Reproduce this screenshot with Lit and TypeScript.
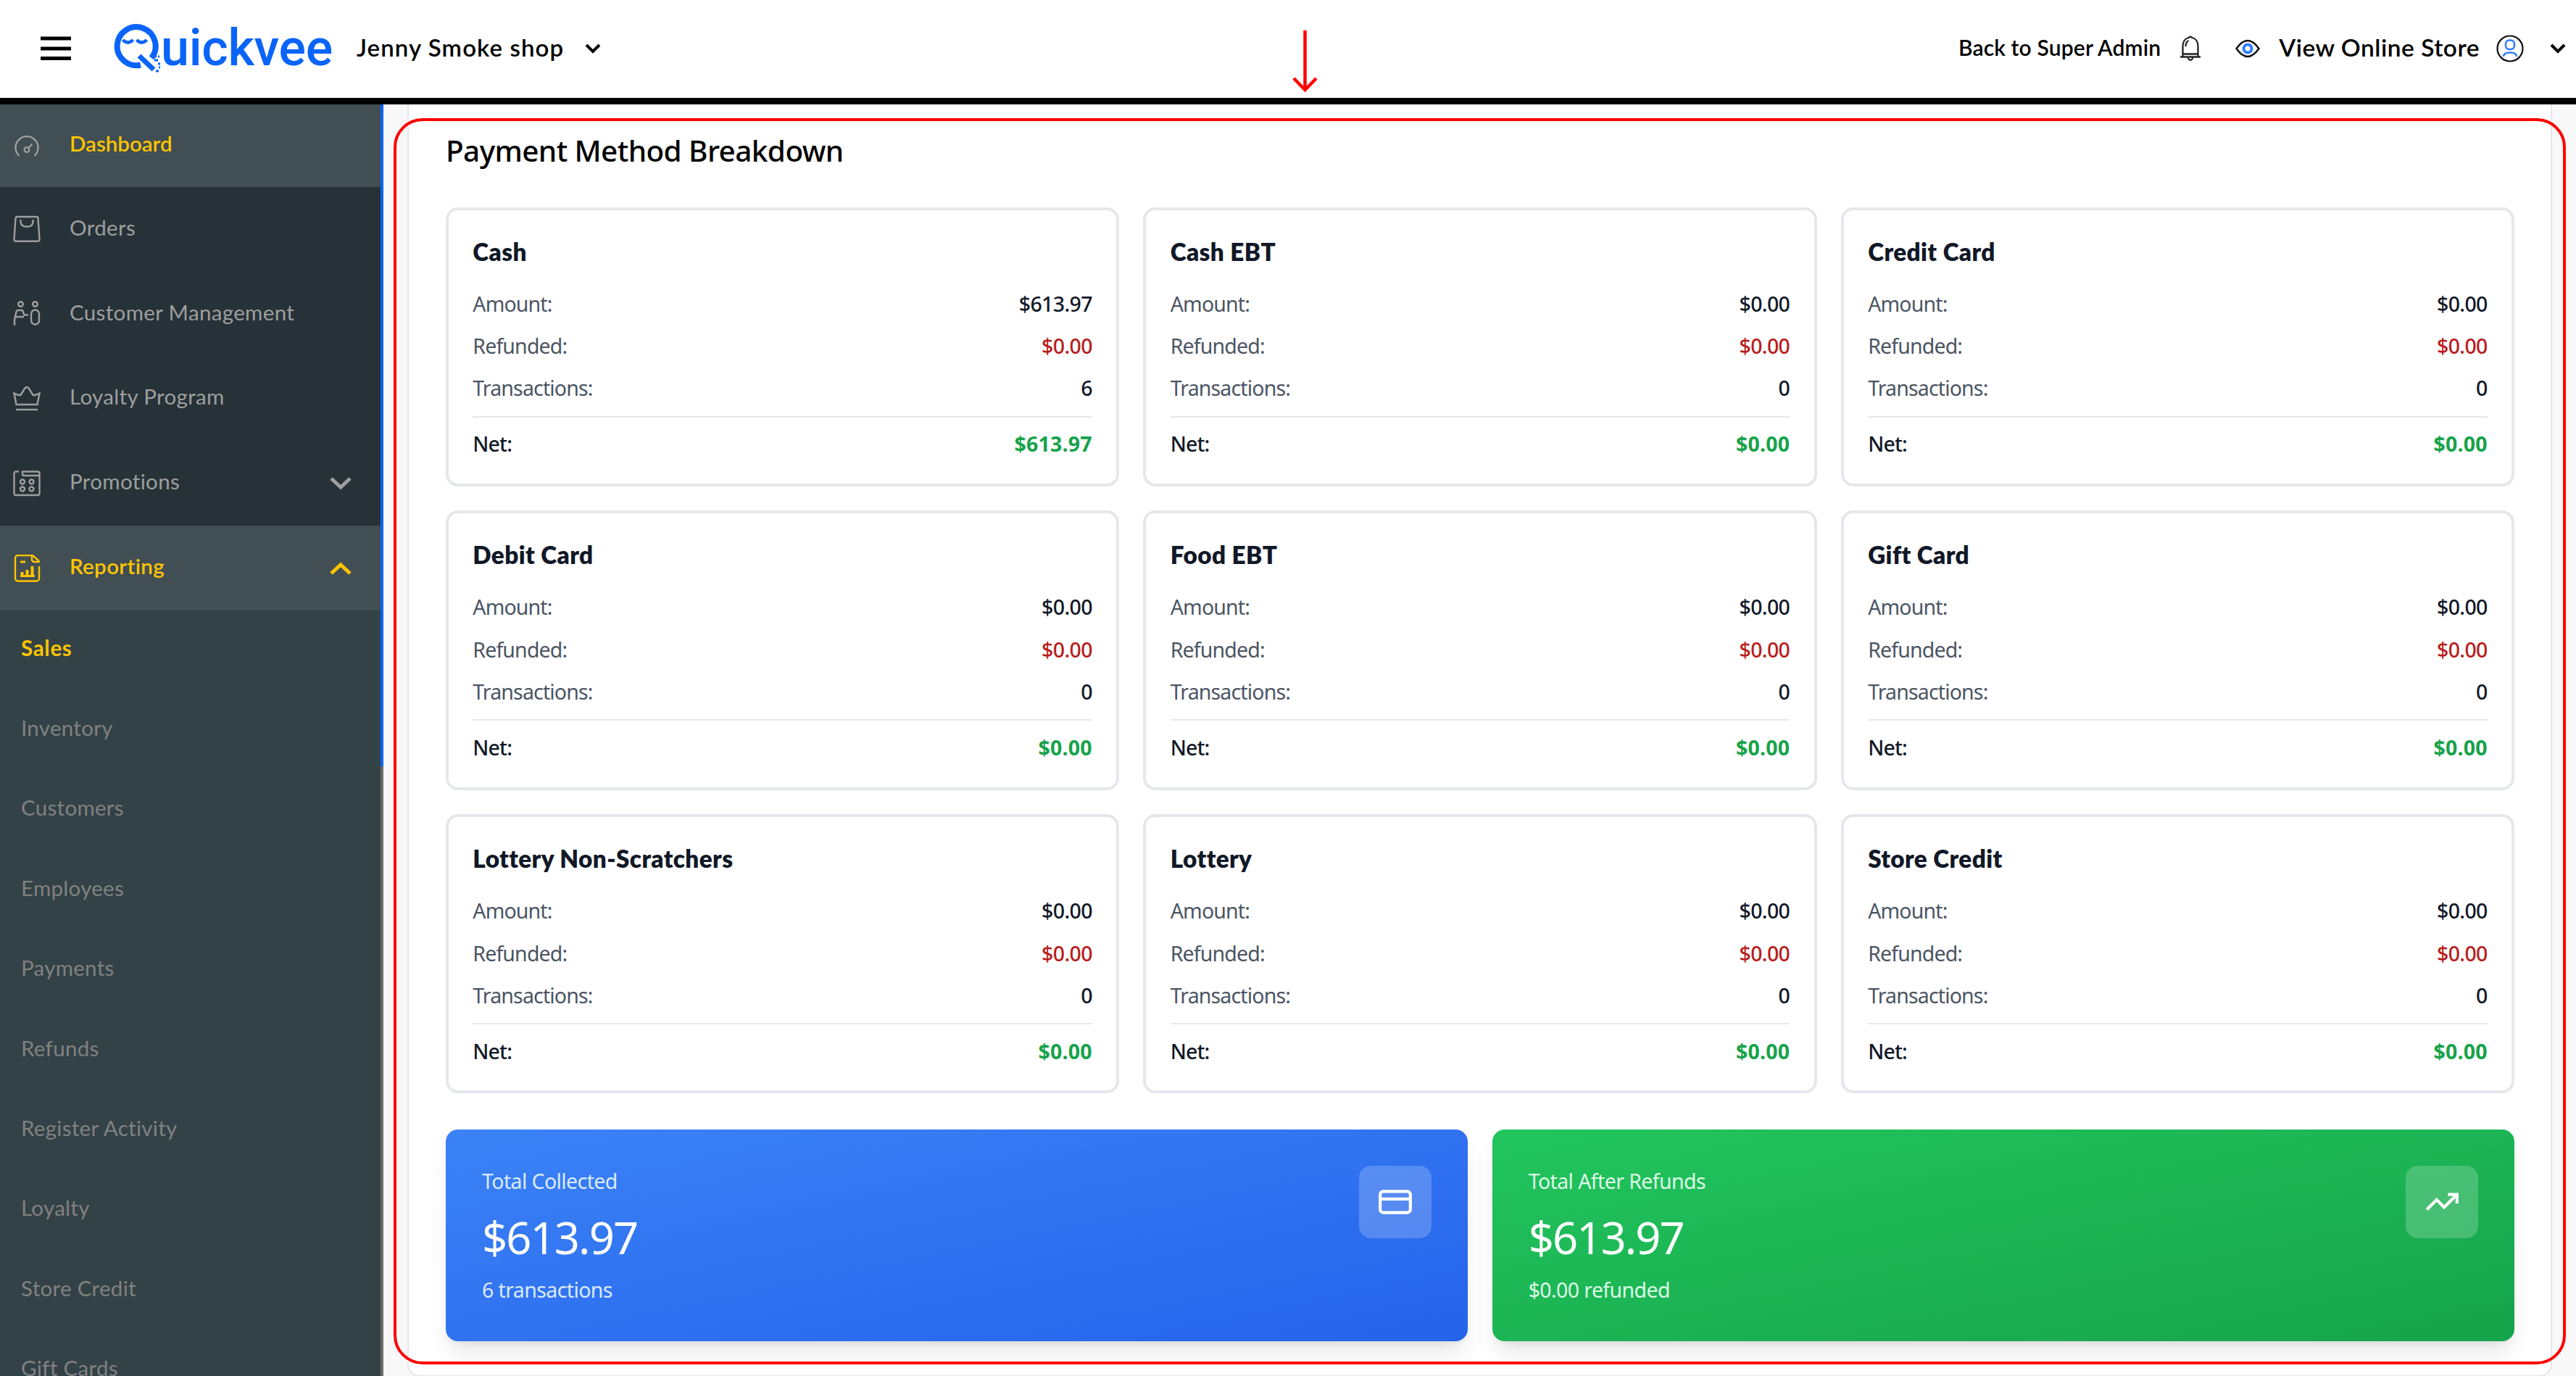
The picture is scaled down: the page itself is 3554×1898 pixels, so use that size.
import { LitElement, html, css, svg, nothing } from "lit";
import { customElement, property, state } from "lit/decorators.js";
import { classMap } from "lit/directives/class-map.js";

interface Method {
  name: string;
  amount: string;
  refunded: string;
  transactions: number;
  net: string;
}

const empty = (name: string): Method => ({
  name,
  amount: "$0.00",
  refunded: "$0.00",
  transactions: 0,
  net: "$0.00",
});

const METHODS: Method[] = [
  { name: "Cash", amount: "$613.97", refunded: "$0.00", transactions: 6, net: "$613.97" },
  empty("Cash EBT"),
  empty("Credit Card"),
  empty("Debit Card"),
  empty("Food EBT"),
  empty("Gift Card"),
  empty("Lottery Non-Scratchers"),
  empty("Lottery"),
  empty("Store Credit"),
];

const REPORTS = [
  "Sales",
  "Inventory",
  "Customers",
  "Employees",
  "Payments",
  "Refunds",
  "Register Activity",
  "Loyalty",
  "Store Credit",
  "Gift Cards",
];

const icons = {
  dashboard: svg`
    <path d="M8.5 33a15.5 15.5 0 1 1 21 0" />
    <circle cx="19" cy="24.500" r="3.4" />
    <path d="M21.5 22l5-5.500" />`,
  orders: svg`
    <path d="M5.500 2h27a2 2 0 0 1 2 2l2 29a2.500 2.500 0 0 1-2.500 2.700h-30a2.500 2.500 0 0 1-2.500-2.700l2-29a2 2 0 0 1 2-2z" />
    <path d="M10.500 6v2.500c0 4.500 3 7.200 8.500 7.200s8.500-2.700 8.500-7.200V6" />`,
  customers: svg`
    <circle cx="10.500" cy="5.500" r="3.300" />
    <circle cx="30.500" cy="5.500" r="3.300" />
    <path d="M2 35v-8l2.500-11q.500-2 2.500-2h6l2.500 6.500H21M2 26q1-3 4-3h9" />
    <rect x="25" y="13.500" width="11" height="20" rx="5.500" />`,
  loyalty: svg`
    <path d="M4.500 27L1.500 11.500q5 3 9 2.500l5.500-9q3-4 6 0l5.500 9q4 .500 9-2.500L33.500 27z" />
    <path d="M4 34h30" />`,
  promotions: svg`
    <path d="M8 2.500H4a2.500 2.500 0 0 0-2.500 2.500v27.500A2.500 2.500 0 0 0 4 35h30a2.500 2.500 0 0 0 2.500-2.500V5A2.500 2.500 0 0 0 34 2.500H13V6a2 2 0 0 0 2 2h21" />
    <circle cx="13" cy="16.500" r="3" />
    <circle cx="25.500" cy="16.500" r="3" />
    <circle cx="13" cy="26.500" r="3" />
    <circle cx="25.500" cy="26.500" r="3" />`,
  reporting: svg`
    <path d="M36 16v17a3.500 3.500 0 0 1-3.500 3.500h-26A3.500 3.500 0 0 1 3 33V4.500A3.500 3.500 0 0 1 6.500 1H27l8.500 7.500V10H29a3 3 0 0 1-3-3V2" />
    <path d="M10 10h7M10 29.500h20" stroke-width="3" />
    <path d="M12.500 29v-5M19.500 29v-8M26.500 29V16" stroke-width="4" />`,
  card: svg`
    <rect x="2" y="5" width="20" height="14" rx="2" />
    <path d="M2 10h20" />`,
  trend: svg`
    <path d="M22 7l-8.500 8.500-5-5L2 17" />
    <path d="M16 7h6v6" />`,
};

@customElement("qv-header")
export class Header extends LitElement {
  static styles = css`
    :host {
      display: flex;
      align-items: center;
      justify-content: space-between;
      box-sizing: border-box;
      height: 144px;
      padding: 0 14px 2px 56px;
      background: #fff;
      border-bottom: 9px solid #000;
      font-family: "Lato", sans-serif;
      font-weight: 600;
      color: #000;
      position: relative;
      white-space: nowrap;
    }
    svg {
      display: block;
      flex: none;
      fill: none;
    }
    .group {
      display: flex;
      align-items: center;
    }
    .menu {
      margin-right: 57px;
    }
    .logo {
      display: flex;
      align-items: center;
      color: #0a64f9;
      margin-right: 33px;
    }
    .logo__text {
      font-family: "Roboto", sans-serif;
      font-weight: 500;
      font-size: 70px;
      line-height: 100px;
      letter-spacing: -0.3px;
      margin-left: -3px;
      padding-bottom: 2px;
    }
    .store {
      font-size: 33px;
      letter-spacing: 1.1px;
      margin-right: 29px;
      padding-bottom: 3px;
    }
    .admin {
      font-size: 30px;
      letter-spacing: 0.15px;
      margin-right: 26px;
      padding-bottom: 4px;
    }
    .bell {
      margin-right: 47px;
    }
    .eye {
      margin-right: 26px;
    }
    .view {
      font-size: 33.5px;
      letter-spacing: 0.5px;
      margin-right: 23px;
      padding-bottom: 4px;
    }
    .user {
      margin-right: 36px;
    }
  `;

  chevron() {
    return html`<svg width="22" height="14" viewBox="0 0 22 14" stroke="#000" stroke-width="4">
      <path d="M2 2l9 9 9-9" />
    </svg>`;
  }

  render() {
    return html`
      <div class="group">
        <svg class="menu" width="42" height="34" viewBox="0 0 42 34">
          <path d="M0 3h42M0 17h42M0 30.500h42" stroke="#000" stroke-width="5" />
        </svg>
        <div class="logo">
          <svg width="70" height="70" viewBox="0 0 70 70" stroke="currentColor">
            <path d="M39 57.500A26.500 26.500 0 1 1 54 48" stroke-width="8" />
            <path d="M14.500 23q7 7 14 0M33.500 23q7 7 14 0" stroke-width="4.500" />
            <path d="M37 45l20 19" stroke-width="7" />
            <path d="M58 51h5M63 56h3M57 46h4M63 46h2M60 66h4M64 61h2" stroke-width="3" />
          </svg>
          <span class="logo__text">uickvee</span>
        </div>
        <span class="store">Jenny Smoke shop</span>
        ${this.chevron()}
      </div>
      <div class="group">
        <span class="admin">Back to Super Admin</span>
        <svg class="bell" width="30" height="36" viewBox="0 0 30 36" stroke="#222" stroke-width="2.300">
          <path d="M1 29.500h28M4.500 29V15q0-10 8-12 2.500-2.500 5 0 8 2 8 12v14M4.500 25.500h21M11.500 31q3.500 6 7 0M8.500 15q0-6 4-8" />
        </svg>
        <svg class="eye" width="34" height="26" viewBox="0 0 34 26" stroke="#111" stroke-width="2.500">
          <path d="M1.500 13Q17-9 32.500 13 17 35 1.500 13z" />
          <circle cx="17" cy="13" r="5.500" stroke="#2f7bff" stroke-width="4" />
        </svg>
        <span class="view">View Online Store</span>
        <svg class="user" width="38" height="38" viewBox="0 0 38 38" stroke="#111" stroke-width="2.200">
          <circle cx="19" cy="19" r="17.500" />
          <rect x="13" y="7.500" width="12" height="12.500" rx="5" stroke="#2f7bff" stroke-width="2.500" />
          <path d="M10 30q0-5.500 9-5.500t9 5.500" stroke="#2f7bff" stroke-width="2.500" />
        </svg>
        ${this.chevron()}
      </div>
    `;
  }
}

@customElement("qv-sidebar")
export class Sidebar extends LitElement {
  static styles = css`
    :host {
      display: grid;
      grid-template-columns: 525px 4px;
      height: 100%;
      overflow: hidden;
      font-family: "Lato", sans-serif;
      font-size: 29.500px;
      white-space: nowrap;
    }
    .nav {
      background: #334247;
      height: 1754px;
      overflow: hidden;
    }
    .nav__item {
      display: flex;
      align-items: center;
      box-sizing: border-box;
      height: 116.800px;
      padding: 0 40px 0 18px;
      background: #263238;
      color: #9e9e9e;
      cursor: pointer;
    }
    .nav__item--first {
      height: 114px;
    }
    .nav__item--lit {
      background: #414e53;
    }
    .nav__item--active {
      color: #ffc400;
      font-weight: 600;
    }
    .nav__icon {
      flex: none;
      margin-right: 40px;
      color: #9e9e9e;
    }
    .nav__item--open .nav__icon {
      color: #ffc400;
    }
    .nav__label {
      flex: 1;
      padding-bottom: 6px;
      letter-spacing: 0.35px;
    }
    .nav__item--first .nav__label {
      padding-bottom: 8px;
      letter-spacing: 0;
    }
    .nav__sub {
      display: flex;
      align-items: center;
      box-sizing: border-box;
      height: 110.400px;
      padding: 0 0 8px 29px;
      letter-spacing: 0.3px;
      color: #818181;
    }
    .nav__sub--active {
      color: #ffc400;
      font-weight: 700;
      letter-spacing: 0.7px;
    }
    .scrollbar {
      background: #6b6b6b;
    }
    .scrollbar__thumb {
      height: 913px;
      background: #0a64f9;
    }
  `;

  @state()
  current = "Sales";

  item(label: string, icon: unknown, opts: { first?: boolean; open?: boolean; arrow?: "up" | "down" } = {}) {
    return html`<div
      class=${classMap({
        nav__item: true,
        "nav__item--first": !!opts.first,
        "nav__item--lit": !!opts.first || !!opts.open,
        "nav__item--active": !!opts.first || !!opts.open,
        "nav__item--open": !!opts.open,
      })}
    >
      <svg class="nav__icon" width="38" height="38" viewBox="0 0 38 38" fill="none" stroke="currentColor" stroke-width="2.400">
        ${icon}
      </svg>
      <span class="nav__label">${label}</span>
      ${opts.arrow
        ? html`<svg width="30" height="18" viewBox="0 0 30 18" fill="none" stroke="currentColor" stroke-width="5">
            <path d=${opts.arrow === "up" ? "M2 16L15 4l13 12" : "M2 2l13 12L28 2"} />
          </svg>`
        : nothing}
    </div>`;
  }

  render() {
    return html`
      <nav class="nav">
        ${this.item("Dashboard", icons.dashboard, { first: true })}
        ${this.item("Orders", icons.orders)}
        ${this.item("Customer Management", icons.customers)}
        ${this.item("Loyalty Program", icons.loyalty)}
        ${this.item("Promotions", icons.promotions, { arrow: "down" })}
        ${this.item("Reporting", icons.reporting, { open: true, arrow: "up" })}
        ${REPORTS.map(
          (r) => html`<div
            class=${classMap({ nav__sub: true, "nav__sub--active": r === this.current })}
            @click=${() => (this.current = r)}
          >
            ${r}
          </div>`
        )}
      </nav>
      <div class="scrollbar"><div class="scrollbar__thumb"></div></div>
    `;
  }
}

@customElement("qv-method-card")
export class MethodCard extends LitElement {
  static styles = css`
    :host {
      display: block;
      box-sizing: border-box;
      height: 385.400px;
      padding: 34.300px 33.300px 30px;
      border: 4px solid #e5e7eb;
      border-radius: 16.700px;
      background: #fff;
      color: #111827;
      font-size: 28.500px;
      letter-spacing: -0.85px;
      line-height: 41.670px;
    }
    .name {
      font-family: "Lato", sans-serif;
      font-weight: 800;
      font-size: 33.300px;
      line-height: 44px;
      letter-spacing: 0.4px;
      padding-top: 1px;
      margin-bottom: 30px;
    }
    .lines {
      display: flex;
      flex-direction: column;
      gap: 16.670px;
    }
    .line {
      display: flex;
      justify-content: space-between;
    }
    .line__label {
      color: #4b5563;
    }
    .line__value {
      font-weight: 500;
      letter-spacing: -0.65px;
    }
    .line__value--refund {
      color: #b91c1c;
    }
    .line--net {
      border-top: 2px solid #e5e7eb;
      padding-top: 16.670px;
      font-weight: 500;
    }
    .line__net {
      color: #16a34a;
      font-weight: 700;
      letter-spacing: 0.2px;
    }
  `;

  @property({ attribute: false })
  method!: Method;

  render() {
    const m = this.method;
    return html`
      <div class="name">${m.name}</div>
      <div class="lines">
        <div class="line">
          <span class="line__label">Amount:</span>
          <span class="line__value">${m.amount}</span>
        </div>
        <div class="line">
          <span class="line__label">Refunded:</span>
          <span class="line__value line__value--refund">${m.refunded}</span>
        </div>
        <div class="line">
          <span class="line__label">Transactions:</span>
          <span class="line__value">${m.transactions}</span>
        </div>
        <div class="line line--net">
          <span>Net:</span>
          <span class="line__net">${m.net}</span>
        </div>
      </div>
    `;
  }
}

@customElement("app-root")
export class AppRoot extends LitElement {
  static styles = css`
    :host {
      display: grid;
      grid-template-rows: 144px 1fr;
      width: 3554px;
      height: 1898px;
      overflow: hidden;
      position: relative;
      background: #f8f8f8;
      font-family: "Noto Sans", sans-serif;
    }
    .body {
      display: grid;
      grid-template-columns: 529px 1fr;
      min-height: 0;
    }
    .content {
      padding: 0 33px 0 33px;
      min-width: 0;
    }
    .panel {
      box-sizing: border-box;
      height: 1755px;
      padding: 35px 50px 0 51px;
      background: #fff;
      border: 2px solid #e5e7eb;
      border-top: none;
      border-radius: 0 0 17px 17px;
    }
    .panel__title {
      margin: 0 0 48.500px;
      font-size: 40.500px;
      font-weight: 500;
      line-height: 58px;
      letter-spacing: -0.6px;
      color: #000;
    }
    .methods {
      display: grid;
      grid-template-columns: repeat(3, 1fr);
      gap: 33.300px;
    }
    .totals {
      display: grid;
      grid-template-columns: repeat(2, 1fr);
      gap: 33.300px;
      margin-top: 50px;
    }
    .total {
      display: flex;
      justify-content: space-between;
      align-items: flex-start;
      box-sizing: border-box;
      height: 291.700px;
      padding: 50px;
      border-radius: 16.700px;
      color: #fff;
      box-shadow: 0 20px 31px -6px rgba(0, 0, 0, 0.1), 0 8px 12px -8px rgba(0, 0, 0, 0.1);
    }
    .total--blue {
      background: linear-gradient(to bottom right, #3b82f6, #2563eb);
      --soft: #dbeafe;
    }
    .total--green {
      background: linear-gradient(to bottom right, #22c55e, #16a34a);
      --soft: #dcfce7;
    }
    .total__text {
      padding-top: 1px;
    }
    .total__note {
      color: var(--soft);
      font-size: 28.500px;
      line-height: 41.670px;
      letter-spacing: -0.6px;
    }
    .total__amount {
      margin: 17.700px 0 15.700px;
      font-size: 61.500px;
      line-height: 75px;
      letter-spacing: -1.900px;
    }
    .total__icon {
      display: grid;
      place-items: center;
      width: 100px;
      height: 100px;
      border-radius: 16.700px;
      background: rgba(255, 255, 255, 0.2);
    }
    .frame {
      position: absolute;
      left: 543px;
      top: 163px;
      box-sizing: border-box;
      width: 2997px;
      height: 1719px;
      border: 4px solid #f00;
      border-radius: 40px;
    }
    .arrow {
      position: absolute;
      left: 1780px;
      top: 40px;
    }
  `;

  total(kind: string, label: string, amount: string, note: string, icon: unknown) {
    return html`<div class="total total--${kind}">
      <div class="total__text">
        <div class="total__note">${label}</div>
        <div class="total__amount">${amount}</div>
        <div class="total__note">${note}</div>
      </div>
      <div class="total__icon">
        <svg width="50" height="50" viewBox="0 0 24 24" fill="none" stroke="#fff" stroke-width="2">
          ${icon}
        </svg>
      </div>
    </div>`;
  }

  render() {
    return html`
      <qv-header></qv-header>
      <div class="body">
        <qv-sidebar></qv-sidebar>
        <main class="content">
          <section class="panel">
            <h2 class="panel__title">Payment Method Breakdown</h2>
            <div class="methods">
              ${METHODS.map((m) => html`<qv-method-card .method=${m}></qv-method-card>`)}
            </div>
            <div class="totals">
              ${this.total("blue", "Total Collected", "$613.97", "6 transactions", icons.card)}
              ${this.total("green", "Total After Refunds", "$613.97", "$0.00 refunded", icons.trend)}
            </div>
          </section>
        </main>
      </div>
      <div class="frame"></div>
      <svg class="arrow" width="42" height="90" viewBox="0 0 42 90" fill="none" stroke="#f00" stroke-width="4.500">
        <path d="M20.500 2v83M5 68l15.500 16L36 68" />
      </svg>
    `;
  }
}
